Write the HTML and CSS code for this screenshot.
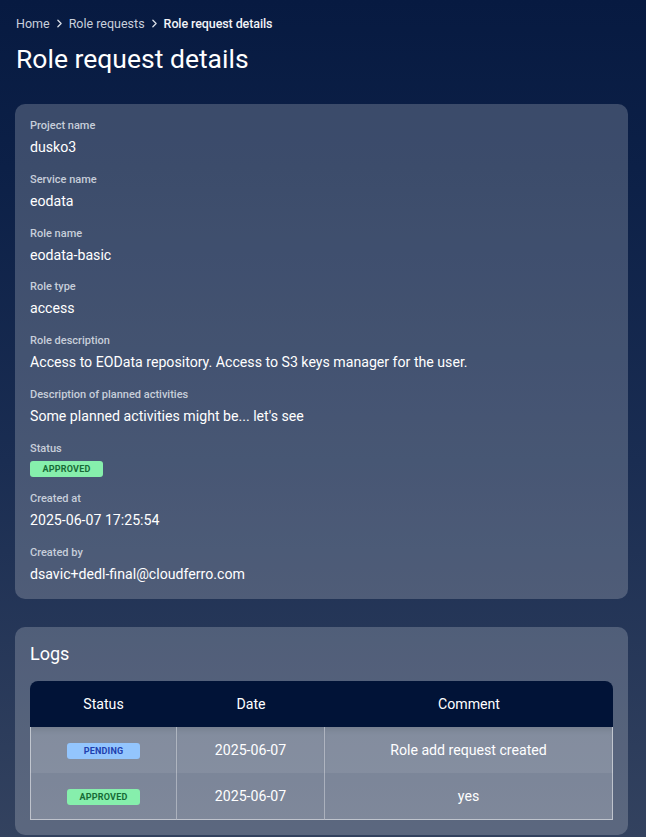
FILE: index.html
```html
<!DOCTYPE html>
<html>
<head>
<meta charset="utf-8">
<link rel="stylesheet" href="styles.css">
</head>
<body>
<div class="page">
  <nav class="crumbs">
    <span class="crumb">Home</span>
    <svg class="chev" viewBox="0 0 24 24" width="13" height="13"><path d="M9 6l6 6-6 6" fill="none" stroke="currentColor" stroke-width="2.4" stroke-linecap="round" stroke-linejoin="round"/></svg>
    <span class="crumb">Role requests</span>
    <svg class="chev" viewBox="0 0 24 24" width="13" height="13"><path d="M9 6l6 6-6 6" fill="none" stroke="currentColor" stroke-width="2.4" stroke-linecap="round" stroke-linejoin="round"/></svg>
    <span class="crumb current">Role request details</span>
  </nav>
  <h1 class="title">Role request details</h1>

  <section class="card details">
    <div class="field"><div class="label">Project name</div><div class="value">dusko3</div></div>
    <div class="field"><div class="label">Service name</div><div class="value">eodata</div></div>
    <div class="field"><div class="label">Role name</div><div class="value">eodata-basic</div></div>
    <div class="field"><div class="label">Role type</div><div class="value">access</div></div>
    <div class="field"><div class="label">Role description</div><div class="value">Access to EOData repository. Access to S3 keys manager for the user.</div></div>
    <div class="field"><div class="label">Description of planned activities</div><div class="value">Some planned activities might be... let's see</div></div>
    <div class="field field-status"><div class="label">Status</div><div class="value badge-row"><span class="badge approved">APPROVED</span></div></div>
    <div class="field"><div class="label">Created at</div><div class="value">2025-06-07 17:25:54</div></div>
    <div class="field"><div class="label">Created by</div><div class="value">dsavic+dedl-final@cloudferro.com</div></div>
  </section>

  <section class="card logs">
    <h2 class="logs-title">Logs</h2>
    <table class="log-table">
      <thead>
        <tr><th class="c-status">Status</th><th class="c-date">Date</th><th class="c-comment">Comment</th></tr>
      </thead>
      <tbody>
        <tr class="row-first"><td><span class="badge pending">PENDING</span></td><td>2025-06-07</td><td>Role add request created</td></tr>
        <tr><td><span class="badge approved">APPROVED</span></td><td>2025-06-07</td><td>yes</td></tr>
      </tbody>
    </table>
  </section>
</div>
</body>
</html>
```
FILE: styles.css
```css
* { box-sizing: border-box; }
html, body { margin: 0; padding: 0; }
body {
  font-family: Roboto, "Liberation Sans", sans-serif;
  color: #fff;
  min-height: 837px;
  background: linear-gradient(180deg, #071a41 0%, #0c2047 20%, #1a2d52 55%, #33425f 100%);
}
.page {
  padding: 14px 18px 0 15px;
}
.crumbs {
  display: flex;
  align-items: center;
  gap: 2px;
  font-size: 12.5px;
  color: #c9d0dc;
  height: 18px;
  padding-left: 1px;
}
.crumb.current { color: #f2f4f8; font-weight: 500; letter-spacing: -0.1px; }
.chev { color: #d8dde6; margin: 0 1px; }
.title {
  margin: 11px 0 0 1px;
  font-size: 26.5px;
  font-weight: 400;
  line-height: 32px;
  color: #fff;
}
.card {
  background: rgba(255,255,255,0.2);
  border-radius: 10px;
}
.details {
  margin-top: 29px;
  padding: 15px 15px 0 15px;
}
.field { height: 53.8px; }
.field-status { height: 50px; }
.label {
  font-size: 11px;
  font-weight: 500;
  color: #c7ceda;
  line-height: 14px;
}
.value {
  font-size: 14.15px;
  line-height: 18px;
  margin-top: 5px;
  color: #fff;
}
.badge-row { margin-top: 4px; line-height: 16px; height: 16px; }
.badge {
  display: inline-block;
  width: 73px;
  height: 16px;
  line-height: 16px;
  border-radius: 3px;
  font-size: 9px;
  font-weight: 700;
  text-align: center;
  letter-spacing: 0.2px;
  vertical-align: middle;
}
.approved { background: #86efac; color: #176b36; }
.pending { background: #93c5fd; color: #1e40af; }
.logs {
  margin-top: 28px;
  padding: 16px 15px 15px 15px;
}
.logs-title {
  margin: 0;
  font-size: 18px;
  font-weight: 400;
  line-height: 22px;
  color: #fff;
}
.log-table {
  margin-top: 16px;
  width: 100%;
  border-collapse: separate;
  border-spacing: 0;
  font-size: 14.15px;
  text-align: center;
}
.log-table th {
  background: #011337;
  font-weight: 400;
  height: 46px;
  color: #fff;
}
.log-table th.c-status { border-top-left-radius: 8px; width: 147px; }
.log-table th.c-date { width: 148px; }
.log-table th.c-comment { border-top-right-radius: 8px; }
.log-table td {
  height: 47px;
  background: rgba(255,255,255,0.22);
  border-right: 1px solid rgba(255,255,255,0.35);
  border-bottom: 1px solid rgba(255,255,255,0.5);
  color: #fff;
  padding: 0;
}
.log-table td:first-child { border-left: 1px solid rgba(255,255,255,0.5); }
.log-table td:last-child { border-right: 1px solid rgba(255,255,255,0.5); }
.log-table tr.row-first td {
  height: 46px;
  border-bottom: none;
  box-shadow: inset 0 6px 6px -4px rgba(0,0,0,0.12);
  background: rgba(255,255,255,0.27);
}
```
